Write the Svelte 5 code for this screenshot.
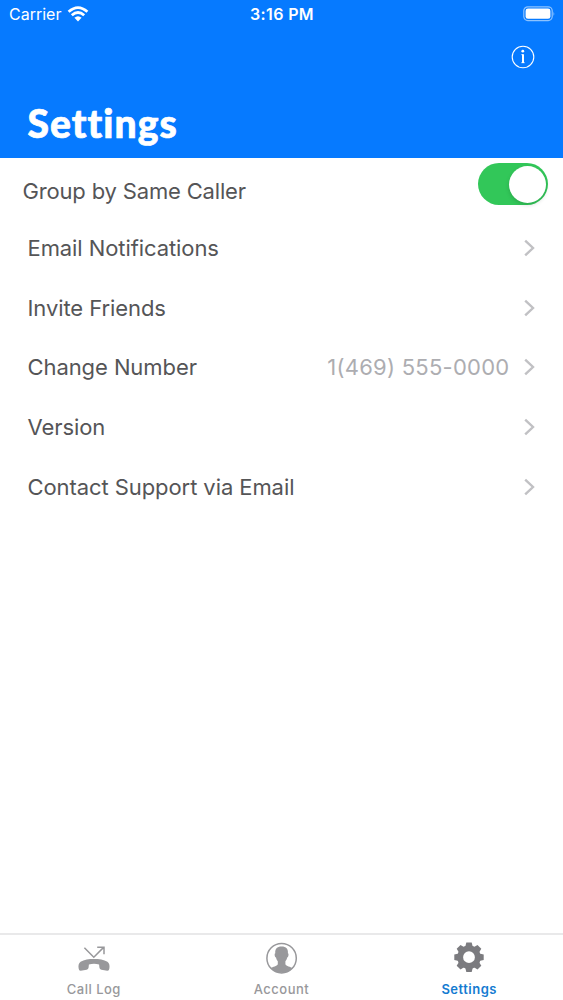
<script lang="ts">
	let groupByCaller = $state(true);
	let activeTab = $state('Settings');

	const rows = [
		{ label: 'Email Notifications', value: '' },
		{ label: 'Invite Friends', value: '' },
		{ label: 'Change Number', value: '1(469) 555-0000' },
		{ label: 'Version', value: '' },
		{ label: 'Contact Support via Email', value: '' }
	];

	const tabs = ['Call Log', 'Account', 'Settings'];
	const teeth = [0, 45, 90, 135, 180, 225, 270, 315];
</script>

<div class="screen">
	<header>
		<div class="status">
			<div class="carrier">
				<span>Carrier</span>
				<svg width="22" height="16" viewBox="0 0 22 16">
					<path d="M1.6 5.8Q11-2.6 20.4 5.8" />
					<path d="M4.8 9.3Q11 3.7 17.2 9.3" />
					<path class="dot" d="M11 15.4L7.4 11.8Q11 8.8 14.6 11.8Z" />
				</svg>
			</div>
			<span class="time">3:16 PM</span>
			<svg class="battery" width="32" height="16" viewBox="0 0 32 16">
				<rect class="case" x="0.8" y="0.8" width="28.4" height="13.8" rx="4" />
				<rect class="level" x="2.6" y="2.6" width="24.8" height="10.2" rx="2.4" />
				<path class="tip" d="M30.5 5.5Q32 7.7 30.5 9.9Z" />
			</svg>
		</div>
		<button class="info" aria-label="Info">
			<svg width="24" height="24" viewBox="0 0 24 24">
				<circle cx="12" cy="12" r="10.8" />
				<circle class="dot" cx="11.8" cy="6.2" r="1.4" />
				<path class="stem" d="M12 9.3V18" />
				<path class="serif" d="M10.3 9.7H12M10.3 17.7H13.7" />
			</svg>
		</button>
		<h1>Settings</h1>
	</header>

	<main>
		<div class="group-row">
			<span>Group by Same Caller</span>
			<button
				class="toggle"
				class:on={groupByCaller}
				role="switch"
				aria-checked={groupByCaller}
				aria-label="Group by Same Caller"
				onclick={() => (groupByCaller = !groupByCaller)}
			>
				<span class="knob"></span>
			</button>
		</div>
		{#each rows as row}
			<div class="row">
				<span class="label">{row.label}</span>
				{#if row.value}
					<span class="value">{row.value}</span>
				{/if}
				<svg width="12" height="18" viewBox="0 0 12 18">
					<path d="M1.2 1.6L9 9L1.2 16.4" />
				</svg>
			</div>
		{/each}
	</main>

	<nav>
		{#each tabs as tab}
			<button class="tab" class:active={activeTab === tab} onclick={() => (activeTab = tab)}>
				<svg width="34" height="34" viewBox="0 0 34 34">
					{#if tab === 'Call Log'}
						<path class="line" d="M7.4 6.7L16.8 16.2L26.6 6.4M20.2 6.2H27V13.2" />
						<path
							d="M1.6 27.2C1.2 24.6 1.6 22.2 3.6 20.8C7 18.4 12 17.9 17 17.9S27 18.4 30.4 20.8C32.4 22.2 32.8 24.6 32.4 27.2Q32.2 30 30.2 29.8L24.4 28.7Q22.6 28.4 22.4 26.6L22.1 23.4Q17 22 11.9 23.4L11.6 26.6Q11.4 28.4 9.6 28.7L3.8 29.8Q1.8 30 1.6 27.2Z"
						/>
					{:else if tab === 'Account'}
						<circle class="line" cx="16.6" cy="17.2" r="14.7" />
						<path
							d="M16.6 5.4C21.2 5.4 23.4 8 22.9 12.2C24 12.3 23.6 15.8 22.2 16.6C21.8 18.5 21.2 19.4 20.4 20.2V23.2C21.4 25.2 25.2 25.6 27.8 27.2Q23.4 31.8 16.6 31.8T5.4 27.2C8 25.6 11.8 25.2 12.8 23.2V20.2C12 19.4 11.4 18.5 11 16.6C9.6 15.8 9.2 12.3 10.3 12.2C9.8 8 12 5.4 16.6 5.4Z"
						/>
					{:else}
						<circle class="gear" cx="17" cy="16.2" r="8.8" />
						{#each teeth as angle}
							<path d="M13.2 6L14.3 1.5H19.7L20.8 6Z" transform="rotate({angle} 17 16.2)" />
						{/each}
					{/if}
				</svg>
				<span>{tab}</span>
			</button>
		{/each}
	</nav>
</div>

<style>
	:global(body) {
		background: #fff;
	}

	.screen {
		display: flex;
		flex-direction: column;
		height: 1000px;
		font-family: Inter, 'Liberation Sans', sans-serif;
		color: #555557;
		background: #fff;
	}

	button {
		padding: 0;
		border: 0;
		background: none;
		font: inherit;
	}

	svg {
		display: block;
		flex-shrink: 0;
	}

	header {
		display: flex;
		flex-direction: column;
		height: 157.5px;
		background: #067aff;
		color: #fff;
	}

	.status {
		display: grid;
		grid-template-columns: 1fr auto 1fr;
		align-items: center;
		height: 28px;
		padding: 0 8px 0 9px;
		font-size: 16px;
	}

	.carrier {
		display: flex;
		align-items: center;
		gap: 6px;
	}

	.carrier svg {
		fill: none;
		stroke: #fff;
		stroke-width: 2.8;
	}

	.carrier .dot {
		fill: #fff;
		stroke: none;
	}

	.time {
		font-weight: 600;
		letter-spacing: 0.35px;
	}

	.battery {
		justify-self: end;
	}

	.case {
		fill: none;
		stroke: #8dc3ff;
		stroke-width: 1.2;
	}

	.level {
		fill: #fff;
	}

	.tip {
		fill: #8dc3ff;
	}

	.info {
		align-self: flex-end;
		margin: 17px 28px 0 0;
	}

	.info svg {
		fill: none;
		stroke: #fff;
		stroke-width: 1.1;
	}

	.info .dot {
		fill: #fff;
		stroke: none;
	}

	.info .stem {
		stroke-width: 2;
	}

	.info .serif {
		stroke-width: 0.8;
	}

	h1 {
		margin: 29px 0 0 27.5px;
		font-family: Lato, sans-serif;
		font-size: 39px;
		font-weight: 900;
		font-variant-ligatures: none;
		line-height: 50px;
		letter-spacing: 1.05px;
		-webkit-text-stroke: 0.7px #fff;
	}

	main {
		flex: 1;
		font-size: 22px;
		letter-spacing: -0.08px;
	}

	.group-row {
		display: flex;
		justify-content: space-between;
		height: 60.5px;
		padding: 5.5px 15px 0 22.5px;
		box-sizing: border-box;
		line-height: 56px;
		letter-spacing: -0.17px;
	}

	.toggle {
		width: 70px;
		height: 42px;
		padding: 2.5px;
		border-radius: 21px;
		background: #d8d8dc;
	}

	.toggle.on {
		background: #32c759;
	}

	.knob {
		display: block;
		width: 37px;
		height: 37px;
		border-radius: 50%;
		background: #fff;
		box-shadow: 0 2px 4px rgba(0, 0, 0, 0.15);
	}

	.on .knob {
		margin-left: auto;
	}

	.row {
		display: flex;
		align-items: center;
		height: 59.75px;
		padding: 0 27px 0 27.5px;
	}

	.label {
		flex: 1;
	}

	.value {
		margin-right: 14.5px;
		color: #adadb1;
		letter-spacing: 0.25px;
	}

	.row svg {
		fill: none;
		stroke: #c1c1c4;
		stroke-width: 2.4;
	}

	nav {
		display: flex;
		height: 67px;
		box-sizing: border-box;
		border-top: 2px solid #e9e9ea;
	}

	.tab {
		display: flex;
		flex: 1;
		flex-direction: column;
		align-items: center;
		padding-top: 6px;
		color: #98989b;
		font-size: 13px;
		font-weight: 500;
		line-height: 16px;
		letter-spacing: 0.5px;
	}

	.tab svg {
		margin-bottom: 6px;
		fill: #98989b;
	}

	.tab .line {
		fill: none;
		stroke: #98989b;
		stroke-width: 1.5;
	}

	.tab .gear {
		fill: none;
		stroke: #7b7b7f;
		stroke-width: 5.8;
	}

	.tab.active {
		color: #147bd1;
		font-weight: 600;
	}

	.tab.active svg {
		fill: #7b7b7f;
	}
</style>
